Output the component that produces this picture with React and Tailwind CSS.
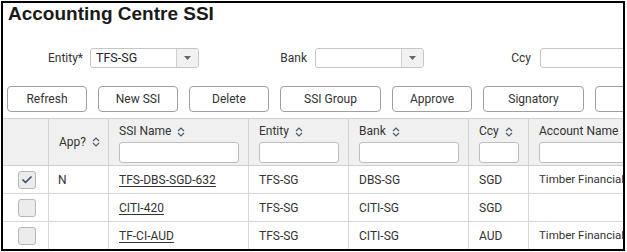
import { Check } from 'lucide-react'

const font = { fontFamily: 'Roboto, "Liberation Sans", sans-serif' }

function SortIcon() {
  return (
    <svg width="8" height="12" viewBox="0 0 8 12" className="shrink-0">
      <path d="M1 5 L4 2 L7 5" fill="none" stroke="#4b5b72" strokeWidth="1.2" />
      <path d="M1 7 L4 10 L7 7" fill="none" stroke="#4b5b72" strokeWidth="1.2" />
    </svg>
  )
}

function Select({ value }) {
  return (
    <div className="flex h-[20px] w-[109px] rounded-[3px] border border-[#c6c6c6] bg-white">
      <div className="flex flex-1 items-center pl-[5px] text-[12.5px] text-[#222]">{value}</div>
      <div className="flex w-[22px] items-center justify-center rounded-r-[3px] border-l border-[#d0d0d0] bg-[#f1f1f1]">
        <svg width="7" height="4" viewBox="0 0 7 4">
          <path d="M0 0 L7 0 L3.5 4 Z" fill="#666" />
        </svg>
      </div>
    </div>
  )
}

function Btn({ label, wide }) {
  return (
    <button
      className={`h-[26px] shrink-0 rounded-[4px] border border-[#a0a0a0] bg-white text-[12px] text-[#333] ${
        wide ? 'w-[101px]' : 'w-[80px]'
      }`}
    >
      {label}
    </button>
  )
}

function Checkbox({ checked }) {
  return (
    <div className="flex h-[18px] w-[18px] items-center justify-center rounded-[3px] border border-[#b8b8b8] bg-[#ececec]">
      {checked && <Check size={12} strokeWidth={3.4} color="#3e5068" />}
    </div>
  )
}

const widths = ['w-[46px]', 'w-[60px]', 'w-[140px]', 'w-[100px]', 'w-[120px]', 'w-[60px]', 'w-[200px]']

const headers = [
  { label: 'SSI Name', input: 'w-[120px]' },
  { label: 'Entity', input: 'w-[80px]' },
  { label: 'Bank', input: 'w-[100px]' },
  { label: 'Ccy', input: 'w-[40px]' },
  { label: 'Account Name', input: 'w-[160px]' },
]

const rows = [
  { checked: true, app: 'N', name: 'TFS-DBS-SGD-632', entity: 'TFS-SG', bank: 'DBS-SG', ccy: 'SGD', account: 'Timber Financial' },
  { checked: false, app: '', name: 'CITI-420', entity: 'TFS-SG', bank: 'CITI-SG', ccy: 'SGD', account: '' },
  { checked: false, app: '', name: 'TF-CI-AUD', entity: 'TFS-SG', bank: 'CITI-SG', ccy: 'AUD', account: 'Timber Financial' },
]

export default function App() {
  return (
    <div className="h-[252px] w-[627px] bg-white pl-px pt-px" style={font}>
      <div className="h-[250px] w-[624px] overflow-hidden border-2 border-black bg-white">
        <h1
          className="pl-[5px] text-[19px] font-bold leading-[22px] text-[#1a1a1a]"
          style={{ fontFamily: '"Liberation Sans", Arial, sans-serif' }}
        >
          Accounting Centre SSI
        </h1>

        <div className="mt-[23px] flex items-center text-[12px] text-[#333]">
          <span className="w-[80px] shrink-0 text-right">Entity*</span>
          <div className="ml-[7px] shrink-0">
            <Select value="TFS-SG" />
          </div>
          <span className="w-[108px] shrink-0 text-right">Bank</span>
          <div className="ml-[8px] shrink-0">
            <Select value="" />
          </div>
          <span className="w-[107px] shrink-0 text-right">Ccy</span>
          <div className="ml-[9px] h-[20px] w-[120px] shrink-0 rounded-[3px] border border-[#c6c6c6]" />
        </div>

        <div className="mt-[18px] flex gap-[11px] pl-[4px]">
          <Btn label="Refresh" />
          <Btn label="New SSI" />
          <Btn label="Delete" />
          <Btn label="SSI Group" wide />
          <Btn label="Approve" />
          <Btn label="Signatory" wide />
          <Btn label="" wide />
        </div>

        <div className="mt-[6px] w-[740px] text-[12px] text-[#333]">
          <div className="flex h-[48px] border-y border-[#cfcfcf] bg-[#f0f0f0]">
            <div className={`${widths[0]} shrink-0 border-r border-[#d2d2d2]`} />
            <div className={`${widths[1]} flex shrink-0 items-center gap-[6px] border-r border-[#d2d2d2] pl-[10px]`}>
              App? <SortIcon />
            </div>
            {headers.map((h, i) => (
              <div
                key={h.label}
                className={`${widths[i + 2]} flex shrink-0 flex-col border-r border-[#d2d2d2] pl-[10px] pt-[5px]`}
              >
                <div className="flex h-[15px] items-center gap-[6px] leading-[15px]">
                  {h.label} <SortIcon />
                </div>
                <div className={`mt-[3px] h-[21px] ${h.input} rounded-[3px] border border-[#bdbdbd] bg-white`} />
              </div>
            ))}
          </div>

          {rows.map((r) => (
            <div key={r.name} className="flex h-[28px] border-b border-[#d6d6d6] bg-white">
              <div className={`${widths[0]} flex shrink-0 items-center justify-center border-r border-[#d6d6d6] pl-[2px]`}>
                <Checkbox checked={r.checked} />
              </div>
              <div className={`${widths[1]} flex shrink-0 items-center border-r border-[#d6d6d6] pl-[9px]`}>{r.app}</div>
              <div className={`${widths[2]} flex shrink-0 items-center border-r border-[#d6d6d6] pl-[10px]`}>
                <span className="underline underline-offset-2">{r.name}</span>
              </div>
              <div className={`${widths[3]} flex shrink-0 items-center border-r border-[#d6d6d6] pl-[10px]`}>{r.entity}</div>
              <div className={`${widths[4]} flex shrink-0 items-center border-r border-[#d6d6d6] pl-[10px]`}>{r.bank}</div>
              <div className={`${widths[5]} flex shrink-0 items-center border-r border-[#d6d6d6] pl-[10px]`}>{r.ccy}</div>
              <div className={`${widths[6]} flex shrink-0 items-center pl-[10px] text-[11.5px]`}>{r.account}</div>
            </div>
          ))}
        </div>
      </div>
    </div>
  )
}
